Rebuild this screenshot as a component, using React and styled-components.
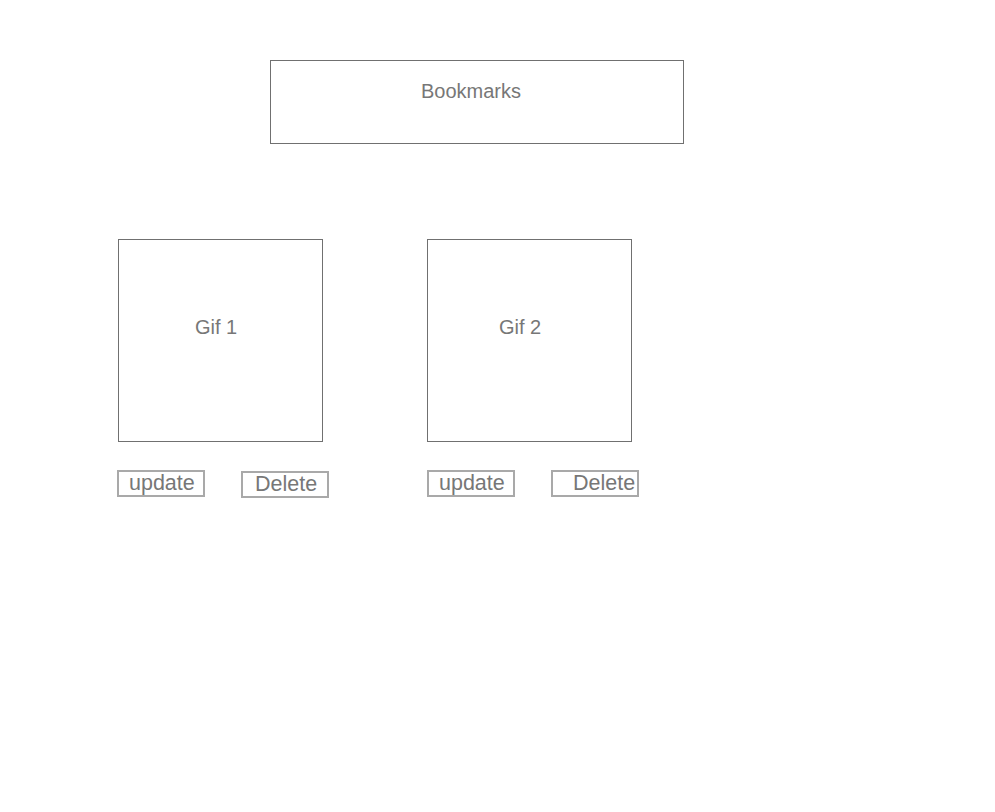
import React from "react"
import styled, { createGlobalStyle } from "styled-components"

const GlobalStyle = createGlobalStyle`
  body {
    margin: 0;
    background: #fff;
    font-family: "Liberation Sans", Arial, sans-serif;
  }
`

const Page = styled.div`
  padding-top: 60px;
  min-height: 752px;
`

const Header = styled.div`
  margin-left: 270px;
  width: 414px;
  height: 84px;
  box-sizing: border-box;
  border: 1px solid #707070;
  padding: 19px 12px 0 0;
  text-align: center;
  font-size: 20px;
  line-height: 23px;
  color: #777;
`

const Gallery = styled.div`
  display: flex;
  gap: 98px;
  margin-top: 95px;
  padding-left: 117px;
`

const Column = styled.div`
  display: flex;
  flex-direction: column;
  width: 212px;
`

const GifBox = styled.div`
  margin-left: ${(p) => p.$shift}px;
  width: 205px;
  height: 203px;
  box-sizing: border-box;
  border: 1px solid #707070;
  padding: 76px ${(p) => p.$right}px 0 0;
  text-align: center;
  font-size: 20px;
  line-height: 23px;
  color: #777;
`

const Actions = styled.div`
  display: flex;
  align-items: flex-start;
  gap: 36px;
  margin-top: 28px;
`

const Button = styled.button`
  width: 88px;
  height: 27px;
  box-sizing: border-box;
  margin: ${(p) => p.$drop || 0}px 0 0;
  border: 2px solid #a9a9a9;
  border-radius: 0;
  background: #fff;
  padding: 0 0 0 ${(p) => p.$pad}px;
  text-align: left;
  font-family: "Liberation Sans", Arial, sans-serif;
  font-size: 21.5px;
  line-height: 23px;
  color: #777;
`

const gifs = [
  { name: "Gif 1", shift: 1, right: 9, deletePad: 12, deleteDrop: 1 },
  { name: "Gif 2", shift: 0, right: 19, deletePad: 20, deleteDrop: 0 },
]

export default function App() {
  return (
    <Page>
      <GlobalStyle />
      <Header>Bookmarks</Header>
      <Gallery>
        {gifs.map((gif) => (
          <Column key={gif.name}>
            <GifBox $shift={gif.shift} $right={gif.right}>
              {gif.name}
            </GifBox>
            <Actions>
              <Button $pad={10}>update</Button>
              <Button $pad={gif.deletePad} $drop={gif.deleteDrop}>
                Delete
              </Button>
            </Actions>
          </Column>
        ))}
      </Gallery>
    </Page>
  )
}
